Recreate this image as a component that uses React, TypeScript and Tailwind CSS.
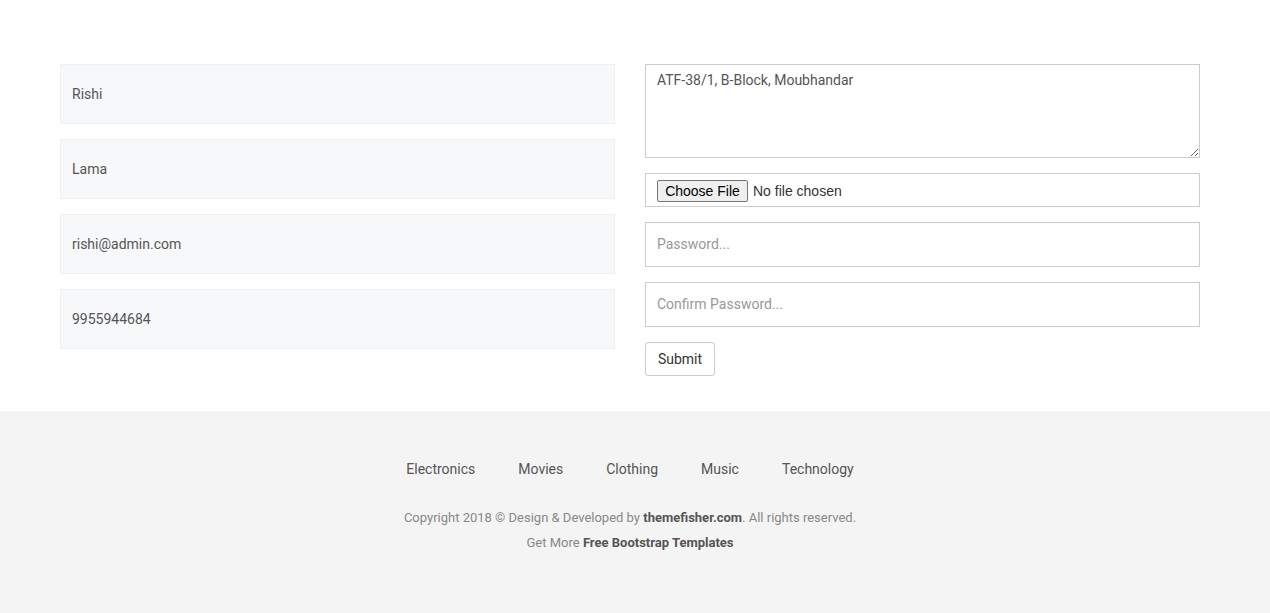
import React from "react";

const filled = ["Rishi", "Lama", "rishi@admin.com", "9955944684"];
const links = ["Electronics", "Movies", "Clothing", "Music", "Technology"];

export default function App() {
  return (
    <div className="min-h-[613px] bg-white font-['Roboto',sans-serif] text-[14px] text-[#555]">
      <section className="pt-[64px] pb-[35px]">
        <form className="ml-[60px] w-[1140px] grid grid-cols-2 gap-x-[30px]">
          <div className="flex flex-col gap-[15px]">
            {filled.map((v) => (
              <input
                key={v}
                defaultValue={v}
                className="h-[60px] w-full bg-[#f7f8f9] border border-[#eef0f1] px-[11px] text-[14px] text-[#555] outline-none"
              />
            ))}
          </div>
          <div className="flex flex-col">
            <textarea
              defaultValue="ATF-38/1, B-Block, Moubhandar"
              className="h-[94px] w-full border border-[#ccc] px-[11px] pt-[5px] text-[14px] text-[#555] outline-none"
            />
            <div className="mt-[15px] h-[34px] border border-[#ccc] flex items-center px-[11px] pt-[1px]">
              <input
                type="file"
                className="font-['Liberation_Sans',Arial,sans-serif] text-[14px] text-[#333] file:h-[22px] file:w-[91px] file:mr-[5px] file:border file:border-[#767676] file:rounded-[2px] file:bg-[#efefef] file:text-[14px] file:text-black file:font-['Liberation_Sans',Arial,sans-serif]"
              />
            </div>
            <input
              type="password"
              placeholder="Password..."
              className="mt-[15px] h-[45px] w-full border border-[#ccc] px-[11px] pb-[1px] text-[14px] outline-none placeholder:text-[#999]"
            />
            <input
              type="password"
              placeholder="Confirm Password..."
              className="mt-[15px] h-[45px] w-full border border-[#ccc] px-[11px] pb-[1px] text-[14px] outline-none placeholder:text-[#999]"
            />
            <div className="mt-[15px]">
              <button
                type="button"
                className="h-[34px] w-[70px] rounded-[3px] border border-[#ccc] bg-white text-[14px] leading-[20px] pb-[1px] text-[#333]"
              >
                Submit
              </button>
            </div>
          </div>
        </form>
      </section>

      <footer className="bg-[#f4f4f4] h-[202px] pt-[48px]">
        <div className="w-[1260px] text-center">
          <ul className="flex justify-center gap-[43px] text-[14px] text-[#555] leading-[20px]">
            {links.map((l) => (
              <li key={l}>{l}</li>
            ))}
          </ul>
          <p className="mt-[29px] text-[13px] text-[#888] leading-[20px]">
            Copyright 2018 © Design &amp; Developed by{" "}
            <span className="font-bold text-[#555]">themefisher.com</span>. All rights reserved.
          </p>
          <p className="mt-[5px] text-[13px] text-[#888] leading-[20px]">
            Get More <span className="font-bold text-[#555]">Free Bootstrap Templates</span>
          </p>
        </div>
      </footer>
    </div>
  );
}
